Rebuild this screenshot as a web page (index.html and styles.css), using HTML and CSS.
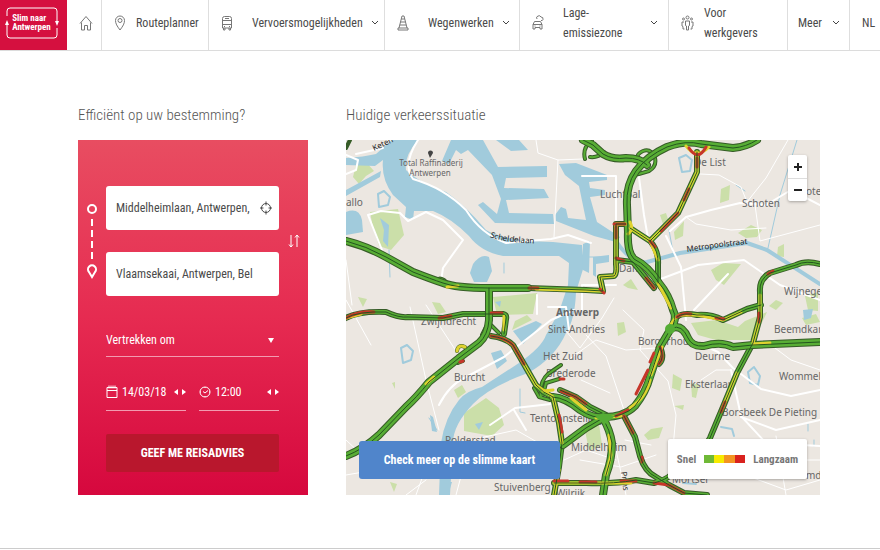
FILE: index.html
```
<!DOCTYPE html>
<html lang="nl">
<head>
    <meta charset="UTF-8">
    <meta name="viewport" content="width=device-width, initial-scale=1.0">
    <title>Slim naar Antwerpen</title>
    <link rel="stylesheet" href="styles.css">
</head>
<body>
    <header>
        <nav class="main-nav">
            <a href="#" class="logo">
                <svg viewBox="0 0 56 34" width="56" height="34">
                    <path d="M3 10V5a3 3 0 0 1 3-3h44a3 3 0 0 1 3 3v10M53 22v7a3 3 0 0 1-3 3H6a3 3 0 0 1-3-3V18"/>
                    <path class="tip" d="M1 19l2-5 2 5zM51 15h4l-2 5z"/>
                </svg>
                <span>Slim naar<br>Antwerpen</span>
            </a>
            <a href="#" class="nav-item" aria-label="Home">
                <svg viewBox="0 0 14 16" width="14" height="16"><path d="M2.500 7.500V15H5.500V10.500H8.500V15H11.500V7.500M1 8.500L7 1.500L13 8.500"/></svg>
            </a>
            <a href="#" class="nav-item">
                <svg viewBox="0 0 12 16" width="12" height="16"><path d="M6 15C3 11 1.500 8.500 1.500 5.500a4.500 4.500 0 0 1 9 0C10.500 8.500 9 11 6 15z"/><circle cx="6" cy="5.500" r="2"/></svg>
                <span>Routeplanner</span>
            </a>
            <a href="#" class="nav-item wide">
                <svg viewBox="0 0 12 16" width="12" height="16"><path d="M1.500 13V3.500Q1.500 1.500 3.500 1.500h5q2 0 2 2V13zM1.500 9.500h9M4 3.500h4M1.500 5.500h9M2.500 13v2H4v-2M8 13v2h1.500v-2M3 11.500h1M8 11.500h1"/></svg>
                <span>Vervoersmogelijkheden</span>
                <svg class="chevron" viewBox="0 0 8 6" width="8" height="6"><path d="M1 1l3 3 3-3"/></svg>
            </a>
            <a href="#" class="nav-item wide">
                <svg viewBox="0 0 12 16" width="12" height="16"><path d="M1 15h10v-2H1zM2 13L5 1h2l3 12M4.300 4h3.400M3.500 7h5M2.800 10h6.400"/></svg>
                <span>Wegenwerken</span>
                <svg class="chevron" viewBox="0 0 8 6" width="8" height="6"><path d="M1 1l3 3 3-3"/></svg>
            </a>
            <a href="#" class="nav-item wide">
                <svg viewBox="0 0 12 16" width="12" height="16"><path d="M1 14V9.500L2.500 6.500h6L10 9.500V14H8v-1.500H3V14zM1 9.500h9M2.500 11h1M7.500 11h1M5 4a2 2 0 0 1 1-3q2-1 3 1 2.500 0 2 2.500-.5 1.500-2 1"/></svg>
                <span>Lage-<br>emissiezone</span>
                <svg class="chevron" viewBox="0 0 8 6" width="8" height="6"><path d="M1 1l3 3 3-3"/></svg>
            </a>
            <a href="#" class="nav-item">
                <svg viewBox="0 0 13 16" width="13" height="16"><circle cx="6.500" cy="2.500" r="1.500"/><circle cx="2.500" cy="4" r="1"/><circle cx="10.500" cy="4" r="1"/><path d="M4.500 10.500V6h4v4.500l-1 .5v4h-2v-4zM3 7H1v4l1 .5V14h1.500M10 7h2v4l-1 .5V14H9.500"/></svg>
                <span>Voor<br>werkgevers</span>
            </a>
            <a href="#" class="nav-item more">
                <span>Meer</span>
                <svg class="chevron" viewBox="0 0 8 6" width="8" height="6"><path d="M1 1l3 3 3-3"/></svg>
            </a>
            <a href="#" class="nav-item lang"><span>NL</span></a>
        </nav>
    </header>

    <main>
        <section>
            <h2>Efficiënt op uw bestemming?</h2>
            <form class="planner">
                <div class="route">
                    <svg class="route-line" viewBox="0 0 10 76" width="10" height="76">
                        <circle cx="5" cy="6" r="4"/>
                        <path d="M5 16v42" stroke-dasharray="7 4"/>
                        <path d="M5 74L2 69a4 4 0 1 1 6 0z"/>
                    </svg>
                    <div class="route-fields">
                        <div class="place">
                            <label for="from" class="sr-only">Van</label>
                            <input type="text" id="from" value="Middelheimlaan, Antwerpen,">
                            <button type="button" aria-label="Mijn locatie">
                                <svg viewBox="0 0 12 14" width="12" height="14"><circle cx="6" cy="7" r="4.500"/><path d="M6 .5v4M6 9.500v4M0 7h3.500M8.500 7H12"/></svg>
                            </button>
                        </div>
                        <div class="place">
                            <label for="to" class="sr-only">Naar</label>
                            <input type="text" id="to" value="Vlaamsekaai, Antwerpen, Bel">
                        </div>
                    </div>
                    <button type="button" aria-label="Wissel om">
                        <svg viewBox="0 0 12 14" width="12" height="14"><path d="M3 1v12M1 10.500L3 13l2-2.500M9 13V1M7 3.500L9 1l2 2.500"/></svg>
                    </button>
                </div>

                <div class="options">
                    <div class="line-field">
                        <label for="moment" class="sr-only">Moment</label>
                        <select id="moment">
                            <option>Vertrekken om</option>
                            <option>Aankomen om</option>
                        </select>
                        <svg class="arrow" viewBox="0 0 6 5" width="6" height="5"><path d="M0 0h6L3 5z"/></svg>
                    </div>
                    <div class="when">
                        <div class="line-field">
                            <label for="date" aria-label="Datum"><svg viewBox="0 0 12 14" width="12" height="14"><path d="M1 2.500h10v10H1zM1 5.500h10M3 .5v3M5 .5v3M7 .5v3M9 .5v3"/></svg></label>
                            <input type="text" id="date" value="14/03/18">
                            <button type="button" aria-label="Vorige dag"><svg class="arrow" viewBox="0 0 4 6" width="4" height="6"><path d="M4 0v6L0 3z"/></svg></button>
                            <button type="button" aria-label="Volgende dag"><svg class="arrow" viewBox="0 0 4 6" width="4" height="6"><path d="M0 0v6l4-3z"/></svg></button>
                        </div>
                        <div class="line-field">
                            <label for="time" aria-label="Uur"><svg viewBox="0 0 12 14" width="12" height="14"><circle cx="6" cy="7" r="5"/><path d="M4 6.500l2 1.500 3-2.500M6 2v1M6 11v1M1 7h1M10 7h1"/></svg></label>
                            <input type="text" id="time" value="12:00">
                            <button type="button" aria-label="Vroeger"><svg class="arrow" viewBox="0 0 4 6" width="4" height="6"><path d="M4 0v6L0 3z"/></svg></button>
                            <button type="button" aria-label="Later"><svg class="arrow" viewBox="0 0 4 6" width="4" height="6"><path d="M0 0v6l4-3z"/></svg></button>
                        </div>
                    </div>
                    <button type="submit" class="submit">GEEF ME REISADVIES</button>
                </div>
            </form>
        </section>

        <section>
            <h2>Huidige verkeerssituatie</h2>
            <div class="map">
                <svg class="map-canvas" viewBox="0 0 474 355" preserveAspectRatio="xMidYMid slice">
                    <defs>
                        <!-- ring road and motorways -->
                        <g id="motorways">
                            <path d="M0 101Q20 106 40 117L67 132Q85 139 97 143Q110 148 143 148H182"/>
                            <path d="M143 148V180Q142 195 133 203L113 218L83 242Q70 258 60 267L33 295Q18 309 0 316"/>
                            <path d="M207 257Q220 258 234 270Q248 279 258 277Q278 277 289 266Q300 252 304 237L314 207L324 190Q332 179 327 170Q323 155 313 143Q302 126 288 119Q281 112 282 92L281 65Q280 45 290 31Q301 16 321 7Q340 0 355 4L387 8Q400 7 411 0"/>
                            <path d="M237 0L247 5L257 14Q267 20 280 18Q294 18 301 25"/>
                            <path d="M326 188Q336 184 342 198Q346 207 358 206Q375 201 387 207L407 205L474 202"/>
                            <path d="M257 278Q264 290 266 303Q266 320 260 335L257 355M217 305L240 288L257 278"/>
                        </g>
                        <g id="ramps">
                            <path d="M287 35Q294 34 303 31Q311 26 309 18Q305 8 297 11Q290 14 291 20M239 19Q236 8 246 0M244 17Q252 18 258 12M92 143Q91 136 98 140L104 146"/>
                            <path d="M215 225L202 234Q193 242 195 257M197 255L200 243L213 239M188 248L193 257L204 260M141 185L136 195M145 185L153 193"/>
                            <path d="M111 211Q112 204 119 207L121 211M112 223L117 221"/>
                        </g>
                        <g id="mainroads">
                            <path d="M0 178Q12 171 40 172Q53 178 62 177L97 178L117 174L157 174Q161 175 160 179L158 194"/>
                            <path d="M182 148L240 150L257 151L254 137L268 136Q271 134 270 124V84H280M270 120L287 122L308 148"/>
                            <path d="M145 196Q160 198 167 205L190 245Q197 253 207 257L213 283L216 303L213 327L208 355"/>
                            <path d="M351 12V32L332 73L304 101L284 88M304 101Q313 111 312 125V143"/>
                            <path d="M474 124Q460 120 450 125L424 133Q413 139 414 152L414 177L407 203L391 233L377 267L364 298L350 320"/>
                            <path d="M331 177Q337 172 351 175Q365 174 377 180L401 169L415 165"/>
                            <path d="M278 276L289 297L294 316Q299 332 310 337L323 345L338 353L361 355"/>
                            <path d="M208 343H240Q270 344 290 340L308 343Q320 340 326 334"/>
                            <path d="M214 250L230 257L244 267L260 275"/>
                            <path d="M314 207Q319 218 313 224"/>
                        </g>
                    </defs>

                    <rect class="land" width="474" height="355"/>

                    <g class="park">
                        <path d="M10 25L20 22L28 31L20 36L13 44L7 37z"/>
                        <path d="M24 72L52 69L58 95L45 110L33 106L27 88z"/>
                        <path d="M147 157L191 153L187 174L151 175z"/>
                        <path d="M118 273L140 258L153 268L158 285L146 296L118 291zM108 250L116 245L120 252L112 258z"/>
                        <path d="M166 190L186 180L181 175L169 181z"/>
                        <path d="M392 93L405 85L416 90L411 97L400 98zM365 130L377 123L395 124L378 145L370 140z"/>
                        <path d="M375 49L384 45L383 60L374 63zM328 92L338 81L337 96L329 100zM314 75L320 73L323 82L317 84z"/>
                        <path d="M345 183L371 180L392 187L399 181L421 172L408 200L370 200L352 195z"/>
                        <path d="M327 234L336 239L334 251L326 248zM345 243L353 245L350 258L346 257zM298 295L305 289L317 287L313 298L302 300z"/>
                        <path d="M432 107L438 104L438 117L431 116zM459 156L472 152L472 171L462 170zM423 166L430 160L437 163L430 170z"/>
                        <path d="M271 183L278 182L280 192L272 196zM277 145L285 139L292 150L282 148zM239 290L253 284L256 305L243 311z"/>
                        <path d="M86 162L94 163L100 172L92 174zM12 157L21 159L17 167zM44 342L51 344L48 352zM46 243L49 242L49 249zM328 266L338 265L337 270zM456 178L470 174L474 182L460 185z"/>
                    </g>

                    <g class="water">
                        <path d="M0 18Q18 17 30 14L46 0H72Q58 16 60 30Q72 42 100 52Q119 65 140 90Q158 101 207 102L236 105L238 126L230 152Q229 180 220 193Q209 218 182 233Q143 247 127 264Q107 285 107 303L104 355H93L95 303Q99 277 113 260Q120 251 136 247L173 223Q196 207 200 195L213 172L222 145L223 123L213 116L157 116Q135 112 123 96Q105 78 87 71L68 71L67 80L59 77L60 67L47 55Q35 39 37 20L29 26L0 25z"/>
                        <path d="M105 0H137L152 27L201 26V37L160 38L158 48L198 49L203 58L160 60L163 73L207 74L208 84L149 83L132 65L137 62L151 74L155 59L146 35L122 10L115 14L110 10L103 24L96 21z"/>
                        <path d="M150 0H173L182 10L165 11zM213 24L230 23L261 35V40L243 42L244 48L259 50V55L244 57L251 82L274 97L270 102L248 96L210 81L209 75L215 67L220 69L222 78L240 80L233 46L219 35z"/>
                        <path d="M0 50L35 31L34 37L0 56zM0 72Q13 67 16 80L17 92L0 95z"/>
                        <path d="M127 124Q135 113 143 117L146 131L141 142H128L124 133z"/>
                        <path d="M167 191L190 181L196 184L177 204zM145 213L155 210L161 221L151 229z"/>
                        <path d="M34 78L43 85L42 107L37 101L38 90zM149 162L155 161L154 167zM237 104L244 101L243 133L237 130zM247 117L263 115L263 122L250 124L250 137L247 135zM457 170L467 169L465 178L458 180z"/>
                        <path d="M129 284L137 282L133 290zM94 342L106 342L103 352zM84 275L87 277L91 292L86 291z"/>
                    </g>
                    <g class="stream">
                        <path class="canal" d="M270 101Q285 124 301 122L334 113L401 103L421 110L474 144"/>
                        <path d="M451 0L434 55L422 108M323 90L327 112M43 110L44 137M158 123V133M174 249V272L179 273M83 278L91 290M462 284V291M468 300V306M390 45L399 51M234 117H260"/>
                        <path class="fort" d="M32 54L38 51L44 57L42 65L33 67zM55 208L61 205L67 211L65 220L57 223zM333 18L340 15L346 20L344 31L336 32zM402 232L408 227L414 236L412 245L404 243zM375 287L386 289L388 296M337 343L350 344"/>
                    </g>

                    <g class="streets">
                        <path class="main" d="M72 0Q56 25 67 39Q98 48 120 70Q135 94 160 103L205 99L222 95L245 103"/>
                        <path class="main" d="M0 15L12 20L10 30L0 34M10 14L37 8M22 75L36 110M22 75L35 71L54 73L62 81L80 72L97 80L117 100L97 128L95 142"/>
                        <path d="M190 0L192 13L212 20L237 19M212 20L208 97M0 120L6 165M0 160L25 205M0 300L16 315M64 167L80 240L93 290M80 165L112 214"/>
                        <path class="main" d="M93 265Q103 245 120 237L158 217L205 180L228 170M144 285L169 268L205 264M168 270L180 290"/>
                        <path class="main" d="M236 36H270V80M292 30L298 75L303 104M320 96L335 127L340 180M324 91L340 77L365 70L394 63L420 65L445 50L474 65"/>
                        <path d="M354 34L373 35L395 47L401 62L420 38L442 0M409 65L414 101L474 85M340 77L350 84L385 90L420 88"/>
                        <path class="main" d="M312 140L352 125L398 120L434 145L474 160M348 170L382 134M270 145H236V173M191 155V174M202 167H220L223 190"/>
                        <path d="M220 191L234 208L256 178L268 158M240 195L260 216L279 273M222 220L250 200L280 210L310 208M235 240L264 253"/>
                        <path class="main" d="M342 198L372 212L387 228L415 249L445 256L474 250M385 230L395 276L420 303L474 306M395 277L430 290L474 280"/>
                        <path d="M425 205L445 220L474 230M355 240L370 230H385M277 170L298 190L294 210L322 241L330 275L325 330M279 300L305 305"/>
                        <path d="M0 335L70 323L82 329M70 355L83 319M110 355L118 325H180M234 320L275 327L310 315M270 310L280 355M373 310L390 320H474M430 296L440 355"/>
                        <path d="M100 315L125 300L170 290L205 310M218 320L240 310L270 320M60 355L80 340M402 336L440 350L474 340"/>
                    </g>

                    <g class="place-names">
                        <text x="0" y="66">allo</text>
                        <text class="small" x="85" y="26" text-anchor="middle">Total Raffinaderij</text>
                        <text class="small" x="84" y="36" text-anchor="middle">Antwerpen</text>
                        <text x="254" y="58">Luchtbal</text>
                        <text x="348" y="26">De List</text>
                        <text x="396" y="67">Schoten</text>
                        <text x="460" y="55">ote</text>
                        <text x="273" y="132">Dam</text>
                        <text x="438" y="155">Wijnege</text>
                        <text x="428" y="193">Beemdkar</text>
                        <text x="433" y="240">Wommel</text>
                        <text class="city" x="210" y="176">Antwerp</text>
                        <text x="202" y="193">Sint-Andries</text>
                        <text x="75" y="185">Zwijndrecht</text>
                        <text x="197" y="220">Het Zuid</text>
                        <text x="200" y="237">Brederode</text>
                        <text x="108" y="241">Burcht</text>
                        <text x="292" y="205">Borgerhout</text>
                        <text x="349" y="220">Deurne</text>
                        <text x="339" y="248">Eksterlaar</text>
                        <text x="376" y="276">Borsbeek De Pieting</text>
                        <text x="184" y="282">Tentoonstelling</text>
                        <text x="225" y="311">Middelheim</text>
                        <text x="99" y="304">Polderstad</text>
                        <text x="148" y="351">Stuivenberg</text>
                        <text x="210" y="357">Wilrijk</text>
                        <text x="326" y="343">Mortsel</text>
                        <text x="460" y="339">md</text>
                    </g>
                    <path class="marker" d="M84 18L82 13a2.500 2.500 0 1 1 5 0z"/>

                    <g class="road-names">
                        <path id="scheldelaan" d="M144 97Q158 103 200 104"/>
                        <path id="metropoolstraat" d="M341 112L375 107L420 102"/>
                        <path id="ketenislaan" d="M28 11L60 -4"/>
                        <path id="prins" d="M275 332L280 370"/>
                        <text><textPath href="#scheldelaan">Scheldelaan</textPath></text>
                        <text><textPath href="#metropoolstraat">Metropoolstraat</textPath></text>
                        <text><textPath href="#ketenislaan">Keten</textPath></text>
                        <text><textPath href="#prins">Prins</textPath></text>
                    </g>

                    <g class="traffic">
                        <use href="#ramps" class="ramp edge"/>
                        <use href="#ramps" class="ramp flow"/>
                        <use href="#mainroads" class="road edge"/>
                        <use href="#mainroads" class="road flow"/>
                        <use href="#motorways" class="motorway edge"/>
                        <use href="#motorways" class="motorway flow"/>
                        <g class="moderate">
                            <path d="M190 149L257 151L254 137L268 136Q271 134 270 124V84H280M158 199L167 205L190 245L207 257L213 283L216 303M208 355L213 330M208 343H285"/>
                            <path d="M284 88L304 101M312 143L325 168M407 204L424 203M414 155V177L407 203M391 233L377 267M351 12V32L332 73L304 101L312 120M225 258L240 270M305 235L316 207"/>
                            <path d="M333 175L351 175L377 180L395 172M284 268Q300 258 304 240M250 278L275 276M263 295L265 315L260 335M101 147L112 146M80 244L88 237M111 211Q112 204 119 207"/>
                            <path d="M340 6Q350 20 363 7M282 94Q288 90 284 82M0 178L15 174M158 176V190M323 187L330 177M197 251L207 250"/>
                        </g>
                        <g class="slow">
                            <path d="M270 87V98M268 84H279M254 149L258 153M270 118L278 121M343 8Q352 22 360 7M351 18V27M343 49L338 60M332 73L315 91M304 101L309 107M300 138L308 148"/>
                            <path d="M145 196Q160 198 167 205L178 224M183 148H192M0 178Q12 171 28 172M93 178L105 176M114 222L117 221M215 251L230 257L240 264M214 239H218"/>
                            <path d="M304 222L308 213M314 207Q319 218 313 224M302 230L290 254M270 276L282 270M278 276L287 293M331 177Q337 172 345 174M370 178L378 179M413 173V182M379 262L375 272"/>
                            <path d="M208 341H222M234 342H250M275 341H290M308 343L323 345L338 353M296 317V322M213 275L216 292M422 134L427 131M145 173L156 173"/>
                        </g>
                        <use href="#mainroads" class="centre"/>
                        <use href="#motorways" class="centre"/>
                        <circle class="junction" cx="324" cy="189" r="5"/>
                        <path class="junction" d="M249 277L257 273L269 276L259 284z"/>
                        <path class="ramp edge" d="M0 8L4 0"/>
                    </g>
                </svg>

                <div class="zoom">
                    <button type="button" aria-label="Zoom in"><svg viewBox="0 0 8 8" width="8" height="8"><path d="M0 4h8M4 0v8"/></svg></button>
                    <button type="button" aria-label="Zoom uit"><svg viewBox="0 0 8 8" width="8" height="8"><path d="M0 4h8"/></svg></button>
                </div>
                <a href="#" class="map-link">Check meer op de slimme kaart</a>
                <div class="legend">
                    <span>Snel</span>
                    <i class="scale"></i>
                    <span>Langzaam</span>
                </div>
            </div>
        </section>
    </main>

    <footer></footer>
</body>
</html>
```
FILE: styles.css
```
/* Basic Styles */
* {
    box-sizing: border-box;
}

body {
    font-family: "Roboto Condensed", Roboto, sans-serif;
    font-size: 12px;
    color: #4a4a4a;
    background-color: #fff;
    margin: 0;
}

a {
    color: inherit;
    text-decoration: none;
}

svg {
    display: block;
    flex: none;
    fill: none;
    stroke: currentColor;
}

input,
select,
button {
    font: inherit;
    color: inherit;
    background: none;
    border: none;
    border-radius: 0;
    margin: 0;
    padding: 0;
    min-width: 0;
}

input,
select {
    height: 20px;
    line-height: 20px;
}

button {
    cursor: pointer;
}

.sr-only {
    position: absolute;
    width: 1px;
    height: 1px;
    overflow: hidden;
    clip-path: inset(50%);
}

/* Navigation */
.main-nav {
    display: grid;
    grid-template-columns: 67px
        minmax(0, 35fr) minmax(0, 107fr) minmax(0, 176fr) minmax(0, 135fr)
        minmax(0, 149fr) minmax(0, 119fr) minmax(0, 62fr) minmax(0, 30fr);
    height: 51px;
    border-bottom: 1px solid #dcdcdc;
}

.logo {
    display: grid;
    place-items: center;
    padding: 0 4px 4px 0;
    background-color: #d5103f;
    color: #fff;
    font-size: 9px;
    font-weight: bold;
    line-height: 9px;
}

.logo > * {
    grid-area: 1 / 1;
}

.logo .tip {
    fill: #fff;
    stroke: none;
}

.nav-item {
    display: flex;
    align-items: center;
    gap: 10px;
    padding: 0 10px 4px 12px;
    border-right: 1px solid #dedede;
    line-height: 20px;
}

.nav-item span {
    flex: 1;
    white-space: nowrap;
}

.nav-item svg {
    color: #777;
    stroke-width: 1;
}

.nav-item .chevron {
    color: #444;
}

.wide {
    gap: 8px;
}

.wide span {
    padding-left: 11px;
}

.more {
    padding-left: 10px;
}

.lang {
    padding: 0 0 4px 12px;
    border-right: none;
}

/* Content */
main {
    display: grid;
    grid-template-columns: 31% minmax(0, 1fr);
    gap: 38px;
    padding: 54px 60px 53px 78px;
}

h2 {
    margin: 0 0 15px;
    font-size: 15px;
    font-weight: 300;
    line-height: 20px;
    color: #555;
    white-space: nowrap;
}

/* Route planner */
.planner {
    height: 355px;
    padding-top: 46px;
    background-image: linear-gradient(#e84d61, #e62b51 50%, #d6083e);
    color: #fff;
}

.route {
    display: grid;
    grid-template-columns: 28px minmax(0, 1fr) 29px;
    align-items: center;
    justify-items: center;
}

.route-line {
    stroke-width: 2;
}

.route-fields {
    display: flex;
    flex-direction: column;
    gap: 22px;
    width: 100%;
}

.place {
    display: flex;
    align-items: center;
    height: 44px;
    padding: 0 7px 0 10px;
    border-radius: 3px;
    background-color: #fff;
    color: #4a4a4a;
}

.place input {
    flex: 1;
}

.options {
    margin: 28px 29px 0 28px;
}

.line-field {
    display: flex;
    align-items: center;
    gap: 4px;
    height: 33px;
    border-bottom: 1px solid #f29bb0;
}

.line-field select,
.line-field input {
    flex: 1;
    appearance: none;
}

.line-field select + .arrow {
    margin-right: 5px;
}

.arrow {
    fill: #fff;
    stroke: none;
}

.when {
    display: grid;
    grid-template-columns: repeat(2, minmax(0, 1fr));
    gap: 13px;
    margin: 16px 0 23px;
}

.when .line-field {
    height: 38px;
}

.submit {
    width: 100%;
    height: 38px;
    border-radius: 2px;
    background-color: #b9172d;
    font-weight: bold;
}

/* Traffic map */
.map {
    position: relative;
    height: 355px;
    overflow: hidden;
}

.map-canvas {
    width: 100%;
    height: 100%;
    stroke: none;
    stroke-linecap: round;
    stroke-linejoin: round;
}

.land {
    fill: #ece7e1;
}

.park {
    fill: #cbdfa9;
}

.water {
    fill: #a1cbdc;
}

.stream {
    stroke: #a1cbdc;
    stroke-width: 1;
}

.canal {
    stroke-width: 4;
}

.fort {
    stroke-width: 2;
}

.streets {
    stroke: #fff;
    stroke-width: 1;
}

.streets .main {
    stroke-width: 2;
}

.place-names {
    font-family: "Noto Sans", sans-serif;
    fill: #666;
    font-size: 10px;
}

.place-names .small {
    font-size: 8px;
}

.place-names .city {
    font-weight: bold;
}

.marker {
    fill: #444;
}

.road-names {
    font-family: "Noto Sans", sans-serif;
    font-size: 8px;
}

.road-names text {
    fill: #222;
}

.edge {
    stroke: #365c27;
}

.flow {
    stroke: #58ad35;
}

.ramp.edge {
    stroke-width: 4;
}

.ramp.flow {
    stroke-width: 2;
}

.road.edge {
    stroke-width: 6;
}

.road.flow {
    stroke-width: 4;
}

.motorway.edge {
    stroke-width: 8;
}

.motorway.flow {
    stroke-width: 6;
}

.moderate {
    stroke: #dfd22f;
    stroke-width: 3;
}

.slow {
    stroke: #c6362a;
    stroke-width: 3;
}

.centre {
    stroke: #24551f;
    stroke-width: 1;
}

.junction {
    fill: #55ad35;
}

.zoom {
    position: absolute;
    top: 15px;
    right: 13px;
    width: 19px;
    border-radius: 2px;
    background-color: #fff;
    box-shadow: 0 1px 3px rgba(0, 0, 0, 0.3);
}

.zoom button {
    display: grid;
    place-items: center;
    width: 100%;
    height: 23px;
    color: #222;
}

.zoom button + button {
    border-top: 1px solid #ddd;
}

.zoom svg {
    stroke-width: 2;
}

.map-link {
    position: absolute;
    left: 13px;
    bottom: 16px;
    width: 201px;
    border-radius: 3px;
    background-color: #5085cb;
    color: #fff;
    font-weight: bold;
    line-height: 38px;
    text-align: center;
}

.legend {
    position: absolute;
    right: 13px;
    bottom: 16px;
    display: flex;
    align-items: center;
    justify-content: center;
    gap: 8px;
    width: 139px;
    height: 40px;
    border-radius: 2px;
    background-color: #fff;
    box-shadow: 0 1px 3px rgba(0, 0, 0, 0.3);
    color: #777;
    font-size: 11px;
    font-weight: bold;
}

.scale {
    flex: none;
    width: 41px;
    height: 8px;
    background-image: linear-gradient(90deg, #6fb936 25%, #f7ea00 25% 50%, #f39422 50% 75%, #d9221e 75%);
}

footer {
    border-top: 1px solid #ccc;
}
```
